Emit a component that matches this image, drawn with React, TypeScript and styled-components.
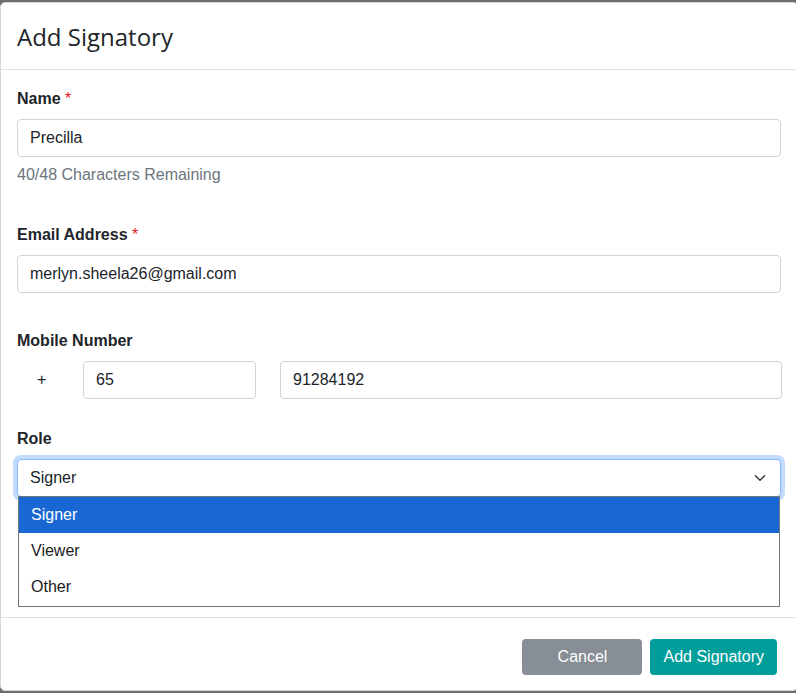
import React from "react";
import styled, { createGlobalStyle } from "styled-components";

const GlobalStyle = createGlobalStyle`
  html, body {
    margin: 0;
    padding: 0;
    overflow: hidden;
    background: #6e6e6e;
    font-family: "Liberation Sans", Arial, sans-serif;
    color: #212529;
  }
  * { box-sizing: border-box; }
`;

const Modal = styled.div`
  margin-top: 2px;
  width: 798px;
  background: #fff;
  border: 1px solid #d6d6d6;
  border-radius: 5px;
  display: flex;
  flex-direction: column;
`;

const Header = styled.div`
  padding: 17px 16px 15px;
  border-bottom: 1px solid #dee2e6;
`;

const Title = styled.h4`
  margin: 0;
  font-family: "Open Sans", "Segoe UI", sans-serif;
  font-weight: 400;
  font-size: 24px;
  line-height: 34px;
  color: #212529;
`;

const Body = styled.div`
  padding: 16px;
  display: flex;
  flex-direction: column;
`;

const Group = styled.div<{ $mb: number }>`
  display: flex;
  flex-direction: column;
  margin-bottom: ${(p) => p.$mb}px;
`;

const Label = styled.label`
  font-size: 16px;
  line-height: 24px;
  font-weight: 700;
  color: #212529;
  padding-top: 1px;
  margin-bottom: 8px;
`;

const Req = styled.span`
  color: #e3141b;
  font-weight: 400;
`;

const Input = styled.div`
  height: 38px;
  padding: 6px 12px;
  font-size: 16px;
  line-height: 24px;
  color: #212529;
  background: #fff;
  border: 1px solid #ced4da;
  border-radius: 4px;
`;

const NumberInput = styled(Input)`
  margin-left: 24px;
  margin-right: -1px;
`;

const Helper = styled.div`
  margin-top: 6px;
  font-size: 16px;
  line-height: 24px;
  color: #6c757d;
`;

const PhoneRow = styled.div`
  display: grid;
  grid-template-columns: 66px 173px 1fr;
  align-items: center;
`;

const Plus = styled.div`
  font-size: 16px;
  line-height: 24px;
  padding-left: 20px;
`;

const SelectWrap = styled.div`
  position: relative;
`;

const Select = styled.div`
  height: 38px;
  padding: 6px 14px 6px 12px;
  display: flex;
  align-items: center;
  justify-content: space-between;
  font-size: 16px;
  line-height: 24px;
  background: #fff;
  border: 1px solid #86b7fe;
  border-radius: 4px;
  box-shadow: 0 0 0 4px rgba(13, 110, 253, 0.25);
`;

const OptionList = styled.ul`
  position: absolute;
  top: calc(100% - 1px);
  left: 1px;
  right: 1px;
  margin: 0;
  padding: 0 0 1px;
  list-style: none;
  background: #fff;
  border: 1px solid #767676;
  z-index: 2;
`;

const Option = styled.li<{ $active?: boolean }>`
  height: 36px;
  line-height: 36px;
  padding: 0 12px;
  font-size: 16px;
  color: ${(p) => (p.$active ? "#fff" : "#1a1a1a")};
  background: ${(p) => (p.$active ? "#1967d2" : "#fff")};
`;

const Footer = styled.div`
  border-top: 1px solid #dee2e6;
  padding: 21px 20px 15px;
  display: flex;
  justify-content: flex-end;
  gap: 8px;
`;

const Button = styled.button<{ $variant: "secondary" | "primary" }>`
  height: 36px;
  border: none;
  border-radius: 4px;
  font-family: "Liberation Sans", Arial, sans-serif;
  font-size: 16px;
  line-height: 24px;
  color: #fff;
  padding: 6px 13px;
  min-width: ${(p) => (p.$variant === "secondary" ? "120px" : "0")};
  background: ${(p) => (p.$variant === "secondary" ? "#878e96" : "#009e9b")};
`;

const Chevron = () => (
  <svg width="12" height="12" viewBox="0 0 16 16" fill="none">
    <path
      d="m2 5 6 6 6-6"
      stroke="#343a40"
      strokeWidth="2"
      strokeLinecap="round"
      strokeLinejoin="round"
    />
  </svg>
);

export default function App() {
  return (
    <>
      <GlobalStyle />
      <Modal>
        <Header>
          <Title>Add Signatory</Title>
        </Header>
        <Body>
          <Group $mb={35}>
            <Label>
              Name <Req>*</Req>
            </Label>
            <Input>Precilla</Input>
            <Helper>40/48 Characters Remaining</Helper>
          </Group>
          <Group $mb={35}>
            <Label>
              Email Address <Req>*</Req>
            </Label>
            <Input>merlyn.sheela26@gmail.com</Input>
          </Group>
          <Group $mb={27}>
            <Label>Mobile Number</Label>
            <PhoneRow>
              <Plus>+</Plus>
              <Input>65</Input>
              <NumberInput>91284192</NumberInput>
            </PhoneRow>
          </Group>
          <Group $mb={104}>
            <Label>Role</Label>
            <SelectWrap>
              <Select>
                <span>Signer</span>
                <Chevron />
              </Select>
              <OptionList>
                <Option $active>Signer</Option>
                <Option>Viewer</Option>
                <Option>Other</Option>
              </OptionList>
            </SelectWrap>
          </Group>
        </Body>
        <Footer>
          <Button $variant="secondary">Cancel</Button>
          <Button $variant="primary">Add Signatory</Button>
        </Footer>
      </Modal>
    </>
  );
}
